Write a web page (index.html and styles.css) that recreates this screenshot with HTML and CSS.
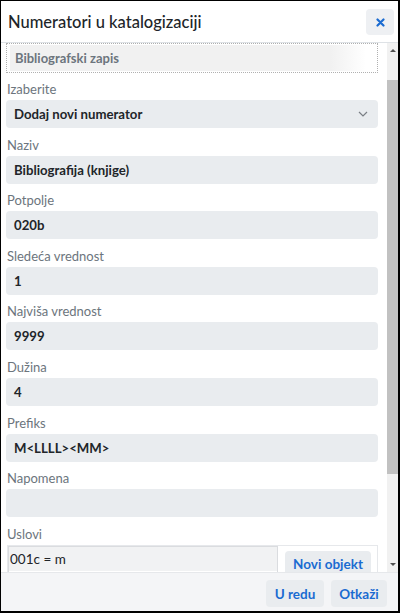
FILE: index.html
```html
<!DOCTYPE html>
<html>
<head>
<meta charset="utf-8">
<link rel="stylesheet" href="styles.css">
</head>
<body>
<div class="dialog">
  <div class="header">
    <div class="title">Numeratori u katalogizaciji</div>
    <button class="close" aria-label="Zatvori">
      <svg width="9" height="9" viewBox="0 0 9 9"><path d="M1.5 1.5 L7.5 7.5 M7.5 1.5 L1.5 7.5" stroke="#1a6bd1" stroke-width="2.2" stroke-linecap="round"/></svg>
    </button>
  </div>
  <div class="main">
    <div class="content">
      <div class="record"><div class="record-inner">Bibliografski zapis</div></div>

      <div class="field">
        <div class="label">Izaberite</div>
        <div class="input select">
          <span>Dodaj novi numerator</span>
          <svg width="10" height="6" viewBox="0 0 10 6"><path d="M1 1 L5 5 L9 1" fill="none" stroke="#7a7f85" stroke-width="1.2"/></svg>
        </div>
      </div>
      <div class="field">
        <div class="label">Naziv</div>
        <div class="input">Bibliografija (knjige)</div>
      </div>
      <div class="field">
        <div class="label">Potpolje</div>
        <div class="input">020b</div>
      </div>
      <div class="field">
        <div class="label">Sledeća vrednost</div>
        <div class="input">1</div>
      </div>
      <div class="field">
        <div class="label">Najviša vrednost</div>
        <div class="input">9999</div>
      </div>
      <div class="field">
        <div class="label">Dužina</div>
        <div class="input">4</div>
      </div>
      <div class="field">
        <div class="label">Prefiks</div>
        <div class="input">M&lt;LLLL&gt;&lt;MM&gt;</div>
      </div>
      <div class="field">
        <div class="label">Napomena</div>
        <div class="input"></div>
      </div>
      <div class="field">
        <div class="label">Uslovi</div>
        <div class="conditions">
          <div class="cond-list">
            <div class="cond-row">001c = m</div>
            <div class="cond-row empty"></div>
          </div>
          <div class="cond-side">
            <button class="btn">Novi objekt</button>
          </div>
        </div>
      </div>
    </div>
    <div class="scrollbar">
      <div class="arrow up"></div>
      <div class="track">
        <div class="thumb"></div>
      </div>
      <div class="arrow down"></div>
    </div>
  </div>
  <div class="footer">
    <button class="btn">U redu</button>
    <button class="btn">Otkaži</button>
  </div>
</div>
</body>
</html>
```

FILE: styles.css
```css
* { box-sizing: border-box; }
html, body { margin: 0; padding: 0; background: #fff; }
body {
  font-family: Lato, "Noto Sans", Arial, sans-serif;
  color: #212529;
}
.dialog {
  width: 400px;
  height: 613px;
  border: 1px solid #000;
  border-right-width: 2px;
  border-bottom-width: 2px;
  display: flex;
  flex-direction: column;
  overflow: hidden;
  background: #fff;
}
.header {
  height: 42px;
  flex: none;
  border-bottom: 1px solid #dee2e6;
  display: flex;
  align-items: center;
  justify-content: space-between;
  padding: 0 4px 0 7px;
}
.title {
  font-size: 16.5px;
  font-weight: 500;
  color: #212529;
}
.close {
  width: 28px;
  height: 26px;
  border: none;
  border-radius: 4px;
  background: #eef0f3;
  display: flex;
  align-items: center;
  justify-content: center;
  padding: 0;
  margin-top: 1px;
}
.main {
  flex: 1;
  display: flex;
  min-height: 0;
  overflow: hidden;
}
.content {
  flex: 1;
  padding: 0 9px 0 5px;
  overflow: hidden;
}
.record {
  height: 30px;
  border: 1px dotted #b0b0b0;
  padding: 1px 11px 1px 3px;
}
.record-inner {
  height: 100%;
  background: linear-gradient(to right, #f1f1f1 0%, #f1f1f1 90%, #ffffff 100%);
  font-size: 13px;
  font-weight: 700;
  color: #6c757d;
  display: flex;
  align-items: center;
  padding-left: 5px;
}
.field {
  margin-top: 7.6px;
}
.record + .field { margin-top: 7px; }
.label {
  font-size: 13px;
  line-height: 18px;
  color: #6c757d;
  padding-left: 1px;
  margin-bottom: 2px;
}
.input {
  height: 28px;
  background: #e9ecef;
  border-radius: 4px;
  font-size: 13.2px;
  font-weight: 700;
  color: #212529;
  display: flex;
  align-items: center;
  padding-left: 8px;
}
.select {
  justify-content: space-between;
  padding-right: 10px;
}
.conditions {
  display: flex;
  border: 1px solid #e6e8eb;
  margin-left: 1px;
  height: 60px;
}
.cond-list {
  width: 271px;
  border-right: 1px solid #dadcdf;
  border-left: 1px solid #dadcdf;
  display: flex;
  flex-direction: column;
}
.cond-row {
  height: 25px;
  background: #f1f2f3;
  border-top: 1px solid #dadcdf;
  font-size: 13.5px;
  color: #212529;
  display: flex;
  align-items: center;
  padding-left: 1px;
}
.cond-row.empty {
  background: #fff;
  border-top: none;
}
.cond-side {
  flex: 1;
  padding: 5px 6px 0 7px;
}
.btn {
  font-family: inherit;
  font-size: 13.5px;
  font-weight: 700;
  color: #1a6bd1;
  background: #e9ecef;
  border: none;
  border-radius: 4px;
  height: 27px;
  padding: 0 6px;
  white-space: nowrap;
}
.cond-side .btn {
  width: 86px;
  height: 26px;
  padding: 0;
}
.scrollbar {
  width: 11px;
  flex: none;
  background: #f1f1f1;
  display: flex;
  flex-direction: column;
}
.arrow {
  height: 13px;
  flex: none;
  display: flex;
  align-items: center;
  justify-content: center;
}
.arrow::before {
  content: "";
  width: 0;
  height: 0;
  border-left: 3px solid transparent;
  border-right: 3px solid transparent;
}
.arrow.up::before { border-bottom: 3px solid #505050; margin-top: 2px; }
.arrow.down::before { border-top: 3px solid #505050; margin-bottom: 2px; }
.track {
  flex: 1;
  padding-top: 24px;
  padding-bottom: 85px;
  display: flex;
}
.thumb {
  flex: 1;
  background: #c1c1c1;
}
.footer {
  height: 39px;
  flex: none;
  background: #f4f5f7;
  border-top: 1px solid #e6e8eb;
  display: flex;
  justify-content: flex-end;
  align-items: flex-start;
  gap: 7px;
  padding: 7px 11px 0 0;
}
.footer .btn:first-child { width: 58px; }
.footer .btn:last-child { width: 56px; }
```
